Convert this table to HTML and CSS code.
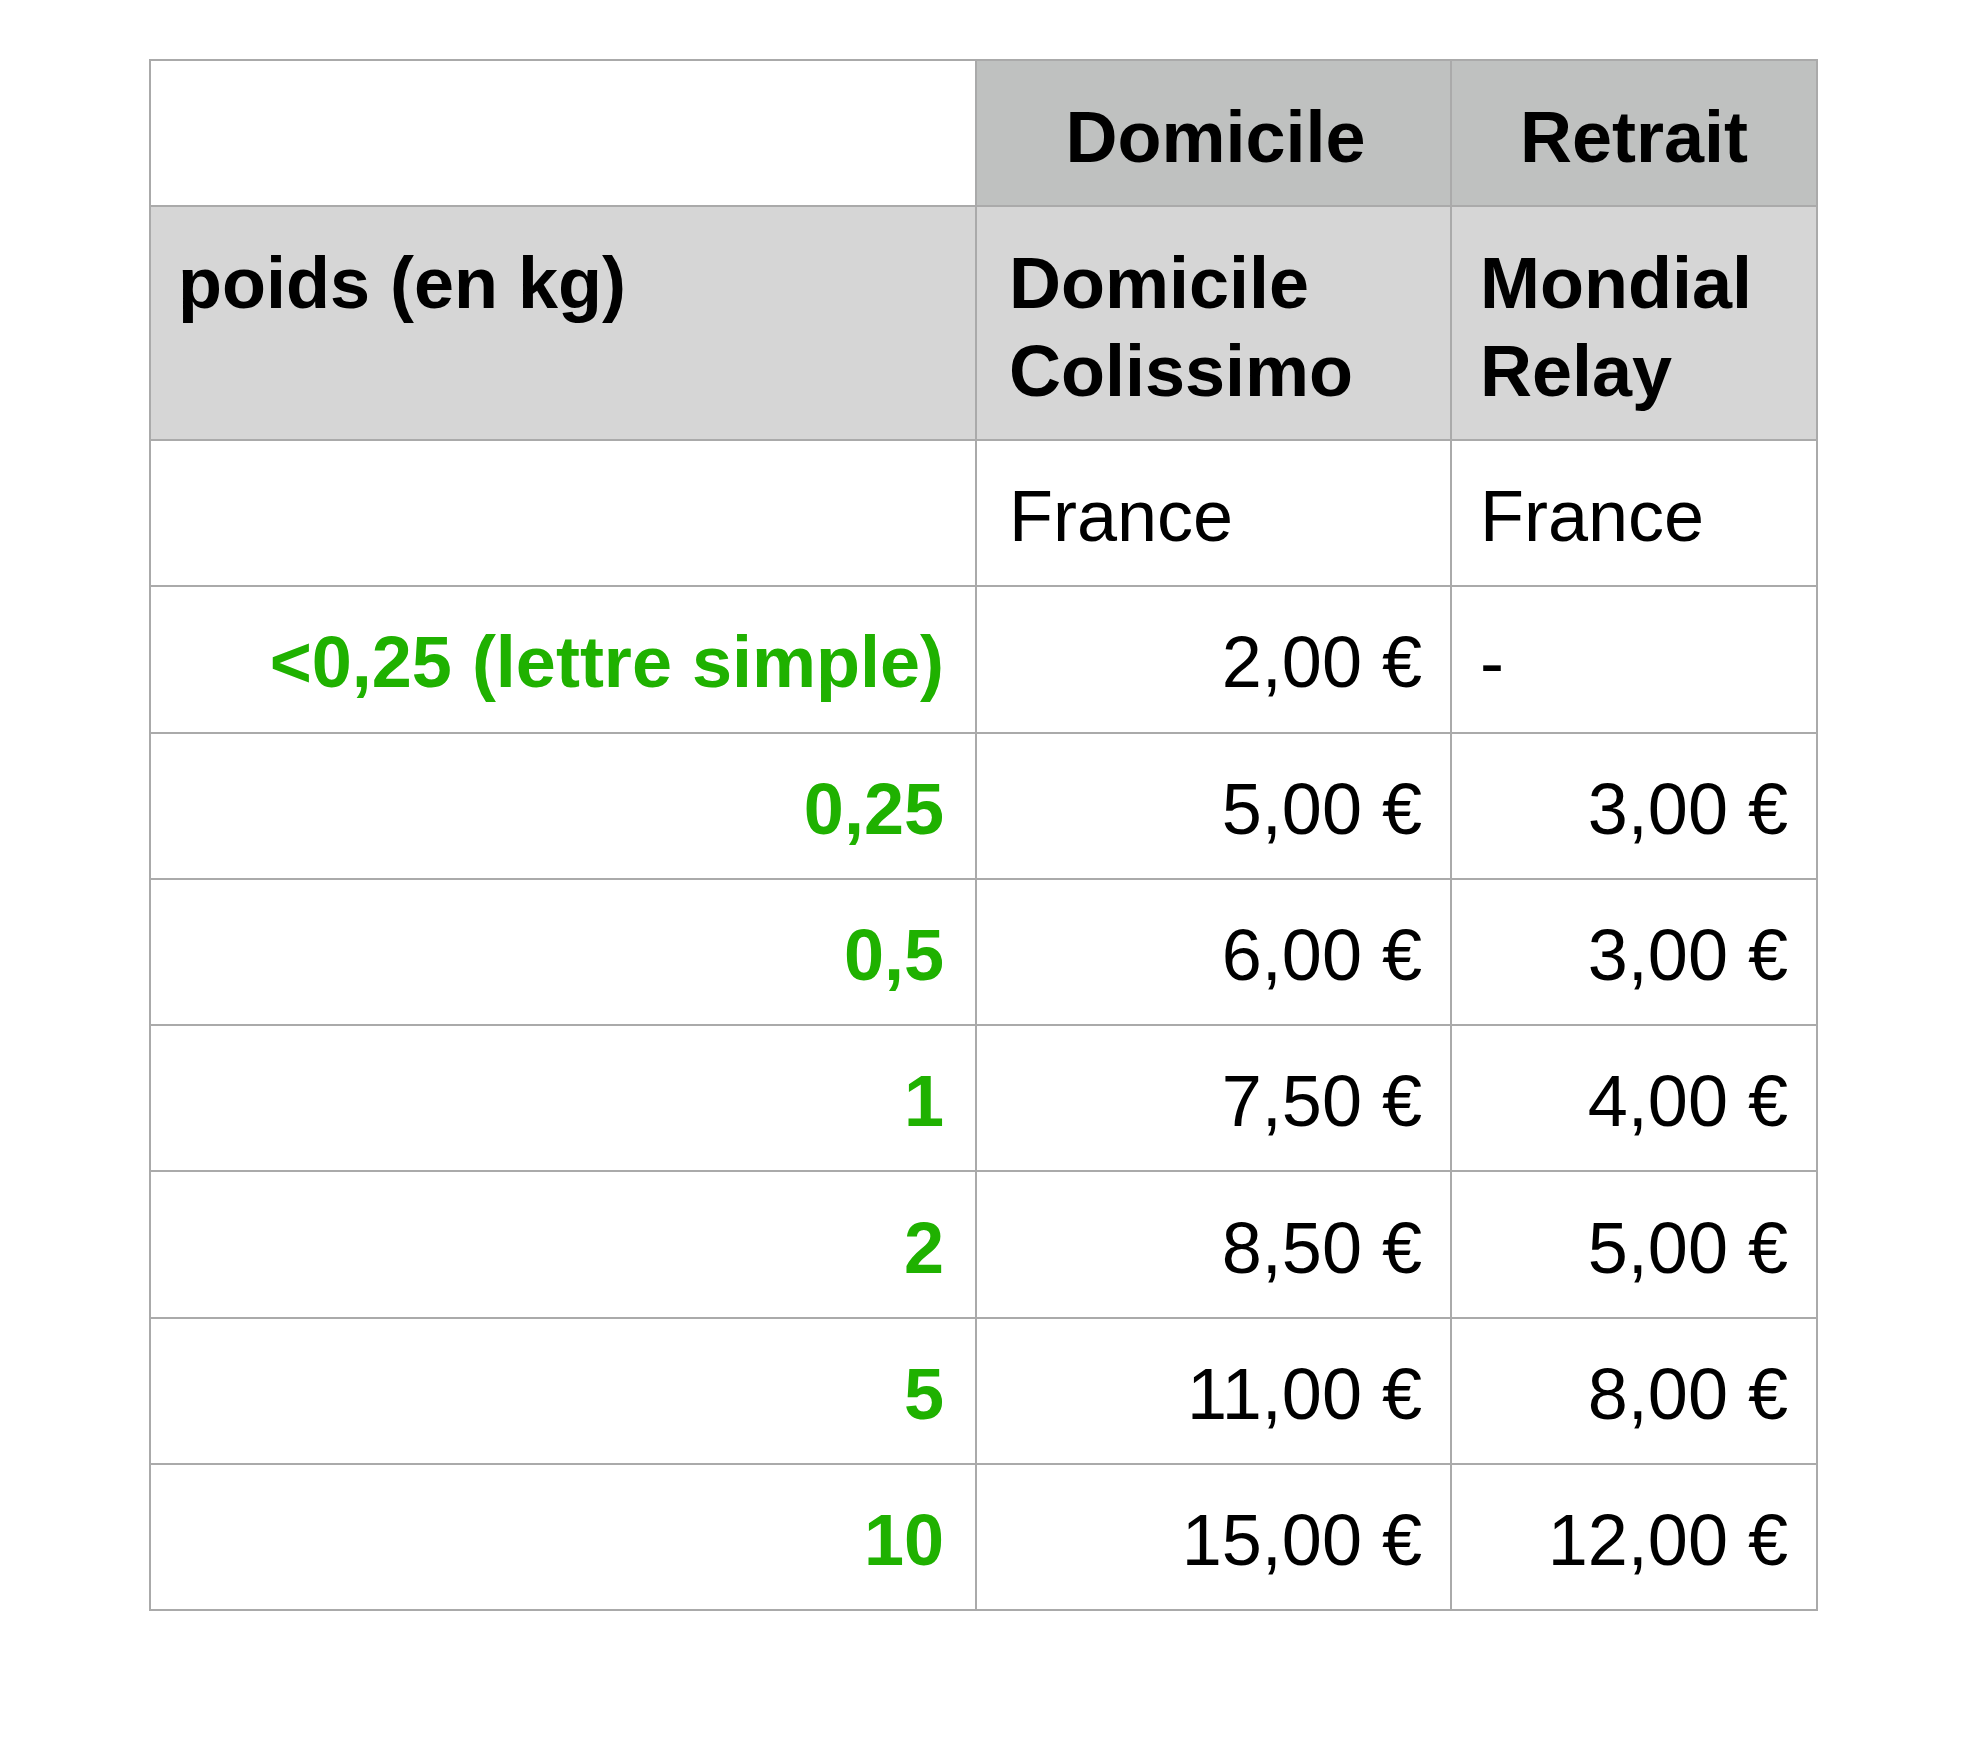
FILE: index.html
```html
<!DOCTYPE html>
<html lang="fr">
<head>
<meta charset="utf-8">
<title>Tarifs</title>
<link rel="stylesheet" href="styles.css">
</head>
<body>
<div class="page">
  <table class="rates">
    <tr class="row-group">
      <td class="c1 blank"></td>
      <td class="c2 group">Domicile</td>
      <td class="c3 group">Retrait</td>
    </tr>
    <tr class="row-head">
      <td class="c1 head">poids (en kg)</td>
      <td class="c2 head">Domicile<br>Colissimo</td>
      <td class="c3 head">Mondial<br>Relay</td>
    </tr>
    <tr class="row">
      <td class="c1"></td>
      <td class="c2 txt">France</td>
      <td class="c3 txt">France</td>
    </tr>
    <tr class="row">
      <td class="c1 w">&lt;0,25 (lettre simple)</td>
      <td class="c2 num">2,00 €</td>
      <td class="c3 txt">-</td>
    </tr>
    <tr class="row">
      <td class="c1 w">0,25</td>
      <td class="c2 num">5,00 €</td>
      <td class="c3 num">3,00 €</td>
    </tr>
    <tr class="row">
      <td class="c1 w">0,5</td>
      <td class="c2 num">6,00 €</td>
      <td class="c3 num">3,00 €</td>
    </tr>
    <tr class="row">
      <td class="c1 w">1</td>
      <td class="c2 num">7,50 €</td>
      <td class="c3 num">4,00 €</td>
    </tr>
    <tr class="row">
      <td class="c1 w">2</td>
      <td class="c2 num">8,50 €</td>
      <td class="c3 num">5,00 €</td>
    </tr>
    <tr class="row">
      <td class="c1 w">5</td>
      <td class="c2 num">11,00 €</td>
      <td class="c3 num">8,00 €</td>
    </tr>
    <tr class="row">
      <td class="c1 w">10</td>
      <td class="c2 num">15,00 €</td>
      <td class="c3 num">12,00 €</td>
    </tr>
  </table>
</div>
</body>
</html>
```
FILE: styles.css
```css
html, body {
  margin: 0;
  padding: 0;
  background: #ffffff;
}

.page {
  padding: 59px 0 0 149px;
}

.rates {
  border-collapse: separate;
  border-spacing: 0;
  border-top: 2px solid #aaaaaa;
  border-left: 2px solid #aaaaaa;
  table-layout: fixed;
  width: 1669px;
  font-family: "Liberation Sans", Arial, Helvetica, sans-serif;
  font-size: 72px;
  line-height: 88px;
  color: #000000;
}

.rates td {
  box-sizing: border-box;
  border-right: 2px solid #aaaaaa;
  border-bottom: 2px solid #aaaaaa;
  padding: 6px 28px 0 28px;
  vertical-align: middle;
  white-space: nowrap;
  overflow: hidden;
}

.c1 { width: 826px; }
.c2 { width: 475px; }
.c3 { width: 366px; }

.rates td.c1 { padding-right: 31px; }
.rates td.c2 { padding-left: 32px; }

.row-group td { height: 146px; }
.rates .row-group td { padding-top: 7px; }
.row-head td { height: 234px; }
.row td { height: 146.3px; }

.rates .group {
  background: #bfc1c0;
  font-weight: bold;
  text-align: center;
  padding-left: 28px;
}

.rates .row-head .head {
  background: #d6d6d6;
  font-weight: bold;
  vertical-align: top;
  padding-top: 32px;
}

.rates .c1.head { padding-left: 27px; }

.txt {
  text-align: left;
}

.num {
  text-align: right;
}

.w {
  text-align: right;
  font-weight: bold;
  color: #1fb100;
}
```
